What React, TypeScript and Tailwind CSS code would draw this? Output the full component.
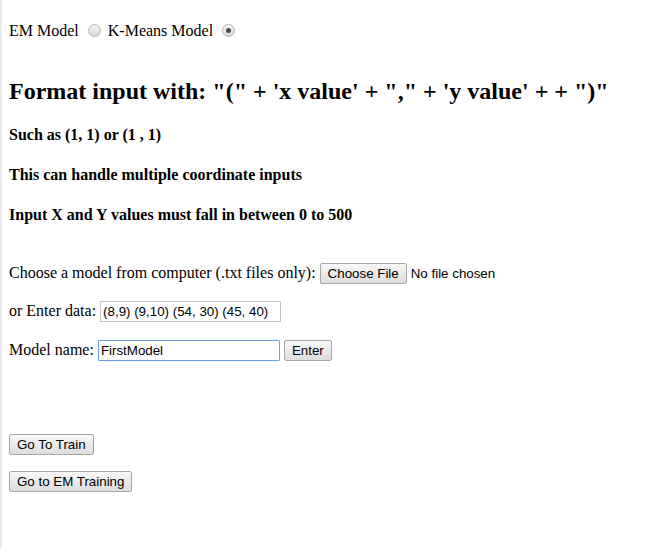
import React from "react";

const serif = "font-['Liberation_Serif',serif]";
const sans = "font-['Liberation_Sans',Arial,sans-serif]";

function Radio({ checked }: { checked?: boolean }) {
  return (
    <span className="ml-[9px] mr-[7px] inline-flex h-[13px] w-[13px] items-center justify-center self-center rounded-full border border-[#b3b3b3] bg-gradient-to-b from-[#f2f2f2] to-[#d9d9d9]">
      {checked && <span className="h-[5px] w-[5px] rounded-full bg-[#4a4a4a]" />}
    </span>
  );
}

function Button({ label }: { label: string }) {
  return (
    <button
      type="button"
      className={`${sans} inline-flex h-[21px] items-center rounded-[2px] border border-[#a6a6a6] bg-gradient-to-b from-[#f8f8f8] to-[#dddddd] px-[7px] text-[13.333px] leading-[15px] text-black`}
    >
      {label}
    </button>
  );
}

export default function App() {
  return (
    <div className={`${serif} min-h-screen border-l-2 border-[#ebebef] bg-white pl-[7px] pt-[21px] text-[16px] leading-[18px] text-black`}>
      {/* model selector */}
      <div className="flex h-[19px] items-center">
        <span>EM Model</span>
        <Radio />
        <span>K-Means Model</span>
        <Radio checked />
      </div>

      <h2 className="mt-[37px] text-[24px] font-bold leading-[28px]">
        Format input with: "(" + 'x value' + "," + 'y value' + + ")"
      </h2>
      <h4 className="mt-[21px] font-bold">Such as (1, 1) or (1 , 1)</h4>
      <h4 className="mt-[22px] font-bold">This can handle multiple coordinate inputs</h4>
      <h4 className="mt-[22px] font-bold">Input X and Y values must fall in between 0 to 500</h4>

      <div className="mt-[39px] flex items-baseline">
        <span>Choose a model from computer (.txt files only):</span>
        <span className="ml-[4px]">
          <Button label="Choose File" />
        </span>
        <span className={`${sans} ml-[4px] text-[13.333px]`}>No file chosen</span>
      </div>

      <div className="mt-[17px] flex items-baseline">
        <span>or Enter data:</span>
        <input
          readOnly
          value="(8,9) (9,10) (54, 30) (45, 40)"
          className={`${sans} ml-[4px] h-[21px] w-[181px] border border-[#c4c4c4] px-[2px] text-[13.333px] text-black outline-none`}
        />
      </div>

      <div className="mt-[18px] flex items-baseline">
        <span>Model name:</span>
        <input
          readOnly
          value="FirstModel"
          className={`${sans} ml-[4px] h-[21px] w-[182px] rounded-[1px] border border-[#6f9fe6] px-[2px] text-[13.333px] text-black outline-none shadow-[0_0_1px_#9fc2f5]`}
        />
        <span className="ml-[4px]">
          <Button label="Enter" />
        </span>
      </div>

      <div className="mt-[73px]">
        <Button label="Go To Train" />
      </div>
      <div className="mt-[16px]">
        <Button label="Go to EM Training" />
      </div>
    </div>
  );
}
